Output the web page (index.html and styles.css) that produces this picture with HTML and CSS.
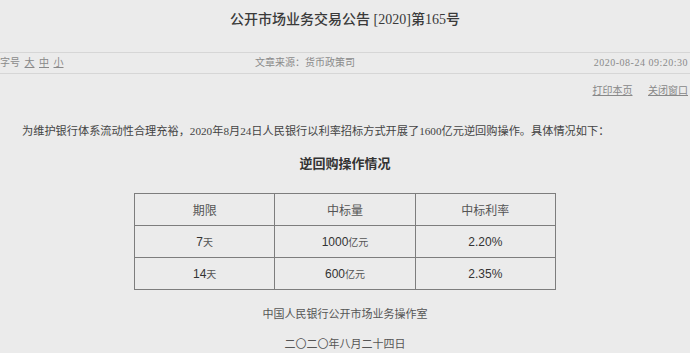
FILE: index.html
```html
<!DOCTYPE html>
<html lang="zh-CN">
<head>
    <meta charset="UTF-8">
    <meta name="viewport" content="width=device-width, initial-scale=1.0">
    <title>公开市场业务交易公告</title>
    <link rel="stylesheet" href="styles.css">
</head>
<body>
    <h1 class="title">公开市场业务交易公告 [2020]第165号</h1>

    <div class="meta">
        <div class="font-size">字号 <a href="#">大</a> <a href="#">中</a> <a href="#">小</a></div>
        <div class="source">文章来源：货币政策司</div>
        <div class="date">2020-08-24 09:20:30</div>
    </div>

    <div class="tools">
        <a href="#">打印本页</a>
        <a href="#">关闭窗口</a>
    </div>

    <p class="intro">为维护银行体系流动性合理充裕，2020年8月24日人民银行以利率招标方式开展了1600亿元逆回购操作。具体情况如下：</p>

    <h2 class="subtitle">逆回购操作情况</h2>

    <table>
        <thead>
            <tr>
                <th>期限</th>
                <th>中标量</th>
                <th>中标利率</th>
            </tr>
        </thead>
        <tbody>
            <tr>
                <td>7<span class="unit">天</span></td>
                <td>1000<span class="unit">亿元</span></td>
                <td>2.20%</td>
            </tr>
            <tr>
                <td>14<span class="unit">天</span></td>
                <td>600<span class="unit">亿元</span></td>
                <td>2.35%</td>
            </tr>
        </tbody>
    </table>

    <div class="sign">
        <p>中国人民银行公开市场业务操作室</p>
        <p>二〇二〇年八月二十四日</p>
    </div>
</body>
</html>
```

FILE: styles.css
```css
body {
    margin: 0;
    background-color: #ebebeb;
    color: #333;
    font-family: "Liberation Serif", "Noto Sans CJK SC", serif;
}
a {
    color: #888;
}
.title {
    margin: 0;
    padding-top: 10px;
    height: 20px;
    line-height: 20px;
    font-size: 14px;
    font-weight: 500;
    text-align: center;
    color: #3a3a3a;
}
.meta {
    display: grid;
    grid-template-columns: 255px 1fr auto;
    margin-top: 22px;
    padding-right: 2px;
    height: 20px;
    line-height: 20px;
    border-top: 1px solid #d6d6d6;
    border-bottom: 1px solid #d6d6d6;
    font-size: 10px;
    color: #8a8a8a;
}
.meta a {
    margin-left: 2px;
}
.date {
    letter-spacing: 0.5px;
}
.tools {
    padding-top: 9px;
    padding-right: 2px;
    line-height: 16px;
    text-align: right;
    font-size: 10px;
}
.tools a {
    margin-left: 13px;
}
.intro {
    margin: 22px 0 0;
    padding-left: 22px;
    line-height: 20px;
    font-size: 11.2px;
    color: #444;
}
.subtitle {
    margin: 13px 0 0;
    line-height: 20px;
    font-size: 13px;
    text-align: center;
    color: #333;
}
table {
    width: 422px;
    margin: 19px auto 0;
    border-collapse: collapse;
}
th, td {
    width: 33.3%;
    height: 31px;
    padding: 0;
    border: 1px solid #7d7d7d;
    text-align: center;
}
th {
    font-weight: normal;
    font-size: 12px;
    color: #555;
}
td {
    font-family: "Liberation Sans", "Noto Sans CJK SC", sans-serif;
    font-size: 12px;
    color: #333;
}
.unit {
    font-size: 10px;
    color: #555;
}
.sign {
    margin-top: 14px;
    text-align: center;
    font-size: 11px;
    color: #555;
}
.sign p {
    margin: 0 0 10px;
    line-height: 20px;
}
```
